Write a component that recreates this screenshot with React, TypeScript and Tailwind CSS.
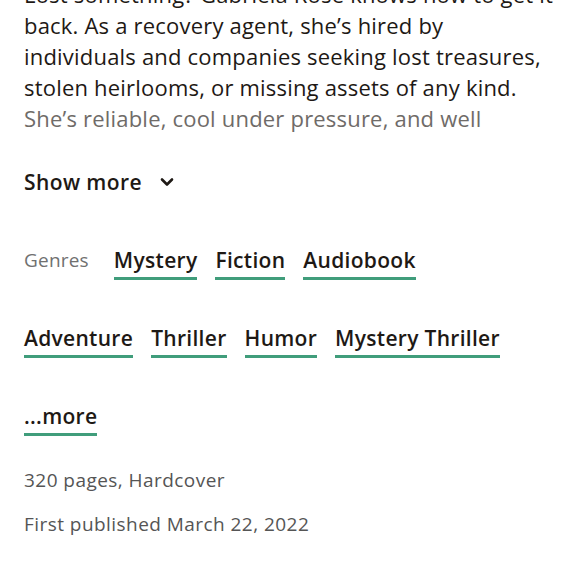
import React from "react";

const lines = [
  "Lost something? Gabriela Rose knows how to get it",
  "back. As a recovery agent, she’s hired by",
  "individuals and companies seeking lost treasures,",
  "stolen heirlooms, or missing assets of any kind.",
];

const rows = [["Mystery", "Fiction", "Audiobook"], ["Adventure", "Thriller", "Humor", "Mystery Thriller"]];

const Tag: React.FC<{ label: string }> = ({ label }) => (
  <a className="block pb-[3px] text-[21px] leading-[28px] tracking-[0.3px] font-semibold text-[#1e1915] border-b-[3px] border-[#409d7b] whitespace-nowrap">
    {label}
  </a>
);

export default function App() {
  return (
    <div
      className="w-[580px] h-[580px] overflow-hidden bg-white px-6"
      style={{ fontFamily: "'Open Sans', Lato, sans-serif" }}
    >
      <div className="-mt-[21px] text-[22px] leading-[31px] tracking-[0.2px] text-[#1e1915]">
        {lines.map((l) => (
          <span key={l} className="block whitespace-nowrap">{l}</span>
        ))}
        <span className="block whitespace-nowrap text-[#6f6b68]">She’s reliable, cool under pressure, and well</span>
      </div>

      <button className="mt-[34px] flex items-center gap-[18px] text-[21px] leading-[28px] tracking-[0.4px] font-semibold text-[#1e1915]">
        Show more
        <svg width="14" height="10" viewBox="0 0 14 10" fill="none">
          <path d="M2 2.5 L7 7.5 L12 2.5" stroke="#1e1915" strokeWidth="2.6" strokeLinecap="round" strokeLinejoin="round" />
        </svg>
      </button>

      <div className="mt-[50px] flex flex-col gap-[44px]">
        <div className="flex items-start gap-[18px]">
          <span className="mr-[7px] text-[19px] leading-[28px] tracking-[0.2px] text-[#707070]">Genres</span>
          {rows[0].map((g) => (
            <Tag key={g} label={g} />
          ))}
        </div>
        <div className="flex items-start gap-[18px]">
          {rows[1].map((g) => (
            <Tag key={g} label={g} />
          ))}
        </div>
        <div className="flex">
          <Tag label="...more" />
        </div>
      </div>

      <div className="mt-[30px] text-[19px] leading-[28px] tracking-[0.45px] text-[#555]">
        <p>320 pages, Hardcover</p>
        <p className="mt-[16px]">First published March 22, 2022</p>
      </div>
    </div>
  );
}
